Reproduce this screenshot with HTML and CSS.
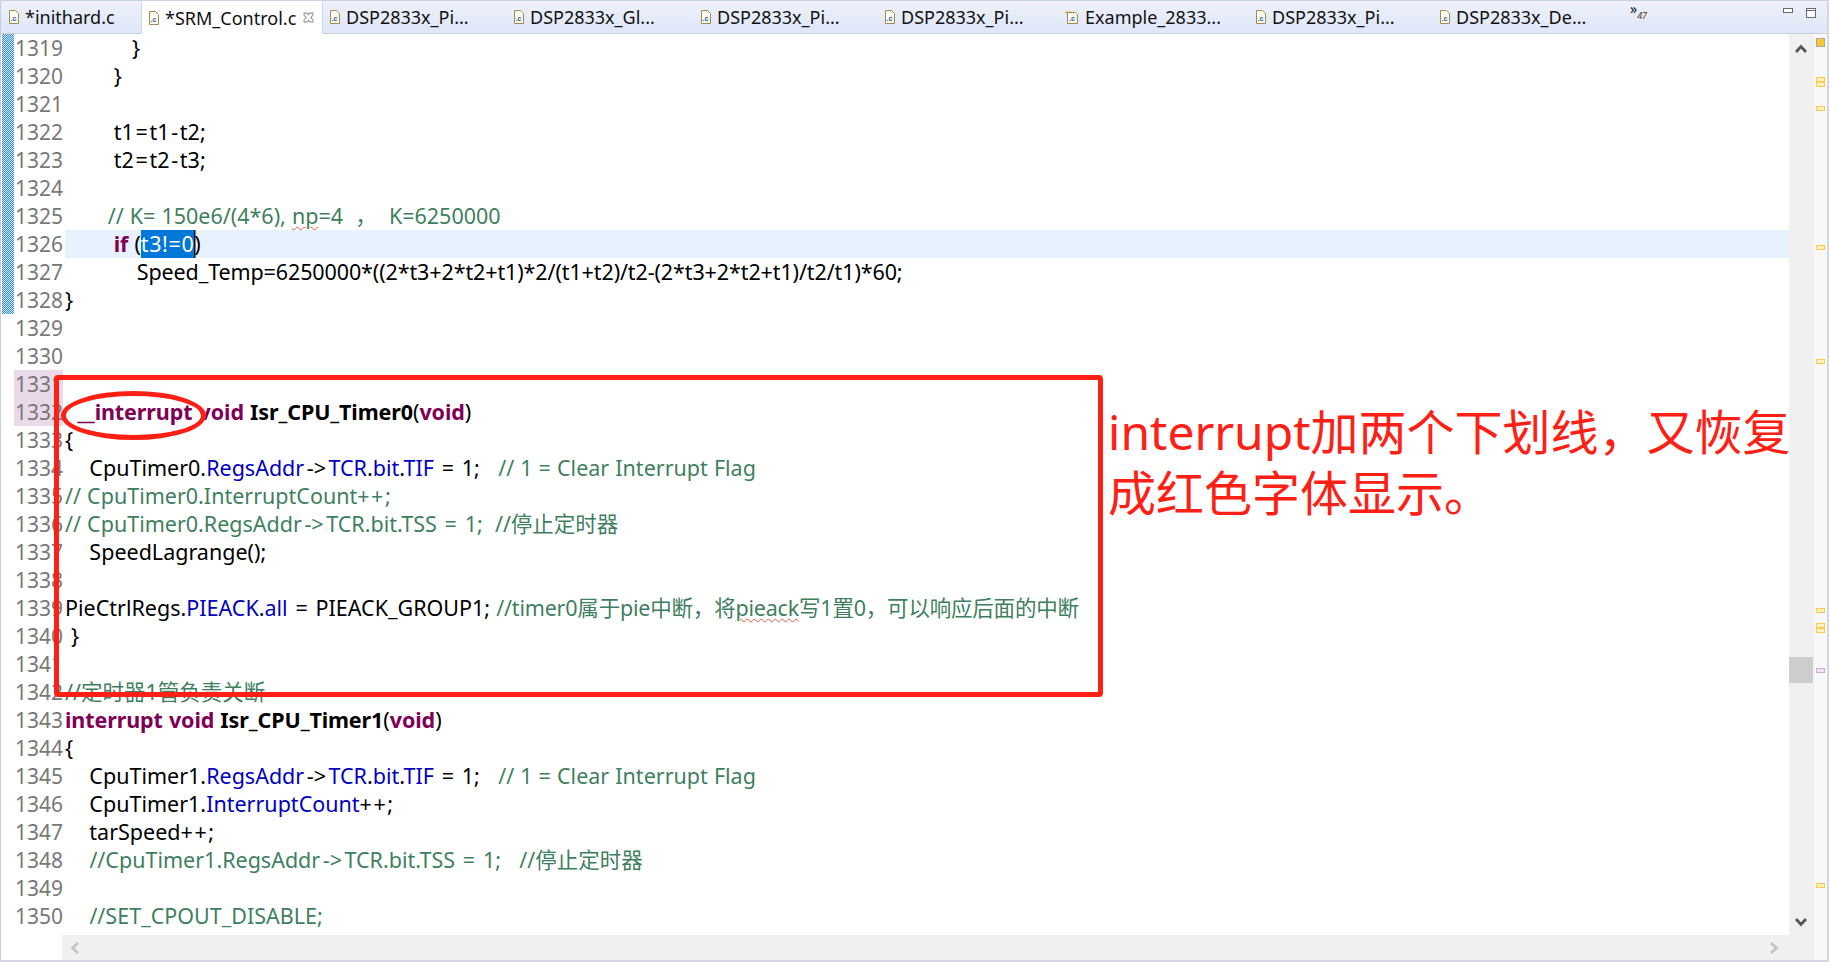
FILE: index.html
```html
<!DOCTYPE html>
<html lang="zh-CN">
<head>
<meta charset="utf-8">
<title>SRM_Control.c</title>
<link rel="stylesheet" href="styles.css">
</head>
<body>
<div class="window">
  <div class="tabs">
    <div class="tab t1"><svg class="fi" viewBox="0 0 12 14"><path d="M1.5.5h6l3 3v10h-9z" fill="#fdfbf0" stroke="#a08c50"/><text x="2.5" y="11" class="fit">.c</text></svg>*inithard.c</div>
    <div class="tab active"><svg class="fi" viewBox="0 0 12 14"><path d="M1.5.5h6l3 3v10h-9z" fill="#fdfbf0" stroke="#a08c50"/><text x="2.5" y="11" class="fit">.c</text></svg>*SRM_Control.c<svg class="close" viewBox="0 0 10 10"><path d="M1 1l3 0 1 1.500 1-1.500 3 0 0 2-2 2 2 2 0 2-3 0-1-1.500-1 1.500-3 0 0-2 2-2-2-2z" fill="none" stroke="#9a9a9a"/></svg></div>
    <div class="tab t3"><svg class="fi" viewBox="0 0 12 14"><path d="M1.5.5h6l3 3v10h-9z" fill="#fdfbf0" stroke="#a08c50"/><text x="2.5" y="11" class="fit">.c</text></svg>DSP2833x_Pi...</div>
    <div class="tab t3 w187"><svg class="fi" viewBox="0 0 12 14"><path d="M1.5.5h6l3 3v10h-9z" fill="#fdfbf0" stroke="#a08c50"/><text x="2.5" y="11" class="fit">.c</text></svg>DSP2833x_Gl...</div>
    <div class="tab t3"><svg class="fi" viewBox="0 0 12 14"><path d="M1.5.5h6l3 3v10h-9z" fill="#fdfbf0" stroke="#a08c50"/><text x="2.5" y="11" class="fit">.c</text></svg>DSP2833x_Pi...</div>
    <div class="tab t3 w181"><svg class="fi" viewBox="0 0 12 14"><path d="M1.5.5h6l3 3v10h-9z" fill="#fdfbf0" stroke="#a08c50"/><text x="2.5" y="11" class="fit">.c</text></svg>DSP2833x_Pi...</div>
    <div class="tab t3 w190"><svg class="fi wide" viewBox="0 0 15 14"><path d="M0 1.500h6l2 2h-8z" fill="#d8b850"/><path d="M2.500 2.500h8l2 2v9h-10z" fill="#fdfbf0" stroke="#a08c50"/><text x="4" y="11" class="fit">.c</text></svg>Example_2833...</div>
    <div class="tab t3"><svg class="fi" viewBox="0 0 12 14"><path d="M1.5.5h6l3 3v10h-9z" fill="#fdfbf0" stroke="#a08c50"/><text x="2.5" y="11" class="fit">.c</text></svg>DSP2833x_Pi...</div>
    <div class="tab t3"><svg class="fi" viewBox="0 0 12 14"><path d="M1.5.5h6l3 3v10h-9z" fill="#fdfbf0" stroke="#a08c50"/><text x="2.5" y="11" class="fit">.c</text></svg>DSP2833x_De...</div>
    <div class="more">»<span class="more-n">47</span></div>
    <div class="winbtns">
      <svg class="wb" viewBox="0 0 10 5"><rect x=".5" y=".5" width="9" height="4" fill="#fff" stroke="#6a6a6a"/></svg>
      <svg class="wb2" viewBox="0 0 10 10"><rect x=".5" y=".5" width="9" height="9" fill="#fff" stroke="#6a6a6a"/><path d="M0 2.500h10" stroke="#6a6a6a"/></svg>
    </div>
  </div>
  <div class="editor">
    <div class="stripe"></div>
    <div class="gutter">
      <div>1319</div><div>1320</div><div>1321</div><div>1322</div><div>1323</div><div>1324</div><div>1325</div><div>1326</div><div>1327</div><div>1328</div><div>1329</div><div>1330</div>
      <div class="mark">1331</div><div class="mark">1332</div>
      <div>1333</div><div>1334</div><div>1335</div><div>1336</div><div>1337</div><div>1338</div><div>1339</div><div>1340</div><div>1341</div><div>1342</div><div>1343</div><div>1344</div><div>1345</div><div>1346</div><div>1347</div><div>1348</div><div>1349</div><div>1350</div>
    </div>
    <div class="code">
      <div class="ln">           }</div>
      <div class="ln">        }</div>
      <div class="ln"></div>
      <div class="ln">        t1<span class="o">=</span>t1<span class="o">-</span>t2;</div>
      <div class="ln">        t2<span class="o">=</span>t2<span class="o">-</span>t3;</div>
      <div class="ln"></div>
      <div class="ln">       <span class="c">// K= 150e6/(4*6), <span class="sq">np</span>=4  ，  K=6250000</span></div>
      <div class="ln cur">        <b class="k">if</b> (<span class="sel">t3!=0</span>)</div>
      <div class="ln speed">            Speed_Temp=6250000*((2*t3+2*t2+t1)*2/(t1+t2)/t2-(2*t3+2*t2+t1)/t2/t1)*60;</div>
      <div class="ln">}</div>
      <div class="ln"></div>
      <div class="ln"></div>
      <div class="ln"></div>
      <div class="ln">  <b class="k">__interrupt</b> <b class="k">void</b> <b>Isr_CPU_Timer0</b>(<b class="k">void</b>)</div>
      <div class="ln">{</div>
      <div class="ln">    CpuTimer0.<span class="f">RegsAddr</span><span class="ar">-&gt;</span><span class="f">TCR</span>.<span class="f">bit</span>.<span class="f">TIF</span> <span class="o">=</span> 1;   <span class="c">// 1 = Clear Interrupt Flag</span></div>
      <div class="ln"><span class="c">// CpuTimer0.InterruptCount<span class="pp">++</span>;</span></div>
      <div class="ln"><span class="c">// CpuTimer0.RegsAddr<span class="ar">-&gt;</span>TCR.bit.TSS <span class="o">=</span> 1;  //停止定时器</span></div>
      <div class="ln">    SpeedLagrange();</div>
      <div class="ln"></div>
      <div class="ln">PieCtrlRegs.<span class="f">PIEACK</span>.<span class="f">all</span> <span class="o">=</span> PIEACK_GROUP1; <span class="c tight">//timer0属于pie中断，将<span class="sq">pieack</span>写1置0，可以响应后面的中断</span></div>
      <div class="ln"> }</div>
      <div class="ln"></div>
      <div class="ln"><span class="c">//定时器1管负责关断</span></div>
      <div class="ln"><b class="k">interrupt</b> <b class="k">void</b> <b>Isr_CPU_Timer1</b>(<b class="k">void</b>)</div>
      <div class="ln">{</div>
      <div class="ln">    CpuTimer1.<span class="f">RegsAddr</span><span class="ar">-&gt;</span><span class="f">TCR</span>.<span class="f">bit</span>.<span class="f">TIF</span> <span class="o">=</span> 1;   <span class="c">// 1 = Clear Interrupt Flag</span></div>
      <div class="ln">    CpuTimer1.<span class="f">InterruptCount</span><span class="pp">++</span>;</div>
      <div class="ln">    tarSpeed<span class="pp">++</span>;</div>
      <div class="ln">    <span class="c">//CpuTimer1.RegsAddr<span class="ar">-&gt;</span>TCR.bit.TSS <span class="o">=</span> 1;   //停止定时器</span></div>
      <div class="ln"></div>
      <div class="ln">    <span class="c">//SET_CPOUT_DISABLE;</span></div>
    </div>
    <div class="vscroll">
      <svg class="arrow" viewBox="0 0 12 9"><path d="M1 8l5-5.500 5 5.500" fill="none" stroke="#555" stroke-width="2.800"/></svg>
      <div class="thumb"></div>
      <svg class="arrow" viewBox="0 0 12 9"><path d="M1 1l5 5.500 5-5.500" fill="none" stroke="#555" stroke-width="2.800"/></svg>
    </div>
    <div class="ruler">
      <i class="top"></i>
      <i class="rm y m1"></i><i class="rm y m2"></i><i class="rm y m3"></i><i class="rm y m4"></i><i class="rm y m5"></i><i class="rm y m6"></i><i class="rm y m7"></i><i class="rm y m7b"></i><i class="rm p m8"></i><i class="rm y m9"></i>
    </div>
    <div class="hscroll">
      <svg class="harrow" viewBox="0 0 9 12"><path d="M8 1L2.500 6 8 11" fill="none" stroke="#c4c4c4" stroke-width="2.800"/></svg>
      <svg class="harrow" viewBox="0 0 9 12"><path d="M1 1l5.500 5L1 11" fill="none" stroke="#c4c4c4" stroke-width="2.800"/></svg>
    </div>
  </div>
  <div class="box"></div>
  <div class="oval"></div>
  <div class="note">interrupt加两个下划线，又恢复<br>成红色字体显示。</div>
</div>
</body>
</html>
```

FILE: styles.css
```css
* { box-sizing: border-box; }
html, body { margin: 0; height: 100%; background: #fff; overflow: hidden; }
.window {
  position: relative;
  width: 1829px;
  height: 962px;
  display: flex;
  flex-direction: column;
  font-family: "Noto Sans", "Noto Sans CJK SC", sans-serif;
  border-right: 2px solid #d4d6e4;
  border-bottom: 2px solid #d4d6e4;
  border-left: 1px solid #c8cce0;
}
.tabs {
  height: 34px;
  flex: none;
  display: flex;
  align-items: stretch;
  background: linear-gradient(#eef1fb, #dfe6f8);
  border-top: 1px solid #ccd2e6;
  border-bottom: 1px solid #c6cee2;
  font-size: 18px;
  color: #111;
}
.tab { display: flex; align-items: center; white-space: nowrap; flex: none; }
.t1 { width: 140px; padding-left: 7px; }
.active {
  width: 182px;
  padding-left: 6px;
  background: #fff;
  margin-bottom: -1px;
  border-left: 1px solid #d0d6e8;
  border-right: 1px solid #d0d6e8;
}
.t3 { width: 184px; padding-left: 6px; }
.w187 { width: 187px; }
.w181 { width: 181px; }
.w190 { width: 190px; }
.fi { width: 12px; height: 14px; margin-right: 5px; flex: none; }
.fi.wide { width: 15px; margin-right: 5px; }
.fit { font-size: 7px; font-weight: 700; fill: #2a5a9a; font-family: "Liberation Sans", sans-serif; }
.close { width: 11px; height: 11px; margin-left: 7px; flex: none; }
.more { margin-left: 13px; padding-top: 1px; font-size: 14px; line-height: 14px; width: 24px; }
.more-n { font-size: 9px; font-style: italic; color: #5a2a10; position: relative; top: 5px; }
.winbtns { margin-left: auto; display: flex; align-items: flex-start; gap: 13px; padding: 7px 11px 0 0; }
.wb { width: 10px; height: 5px; }
.wb2 { width: 10px; height: 10px; }
.editor {
  flex: 1;
  min-height: 0;
  display: grid;
  grid-template-columns: 13px 51px 1fr 25px 13px;
  grid-template-rows: 1fr 25px;
}
.stripe {
  height: 280px;
  margin-left: 1px;
  background: repeating-conic-gradient(#3c8fdc 0 25%, #cfe4f7 0 50%) 0 0 / 2px 2px;
}
.gutter {
  font-size: 21px;
  line-height: 28px;
  color: #787878;
}
.gutter div { height: 28px; width: 49px; padding-left: 1px; }
.gutter .mark { background: #ead9e9; }
.code {
  font-size: 21.5px;
  line-height: 28px;
  word-spacing: .5px;
  color: #000;
  overflow: hidden;
  min-width: 0;
}
.ln { height: 28px; white-space: pre; }
.ln.cur { background: #e8f2fe; }
.speed { letter-spacing: -.11px; }
.k { color: #7f0055; font-weight: 700; }
.c { color: #3f7f5f; }
.f { color: #0000c0; }
.o { padding: 0 1.700px; }
.ar { padding: 0 2.500px; }
.pp { letter-spacing: 1.500px; }
.tight { letter-spacing: -.2px; }
.sel {
  display: inline-block;
  height: 28px;
  background: #0078d7;
  color: #fff;
  letter-spacing: .6px;
  box-shadow: 1.500px 0 0 #111;
}
.sq { text-decoration: underline wavy #e06040 1px; text-underline-offset: 2px; }
b { font-weight: 700; letter-spacing: -.1px; }
.vscroll {
  grid-column: 4;
  grid-row: 1 / 3;
  position: relative;
  background: #f0f0f0;
  display: flex;
  flex-direction: column;
  justify-content: space-between;
  align-items: center;
  padding: 10px 1px 33px 0;
}
.arrow { width: 12px; height: 9px; }
.thumb { position: absolute; left: 0; top: 623px; width: 24px; height: 26px; background: #cdcdcd; }
.ruler {
  grid-column: 5;
  grid-row: 1 / 3;
  position: relative;
  background: #f8f8f8;
}
.top { position: absolute; left: 2px; top: 4px; width: 9px; height: 9px; background: #f8c830; border: 1px solid #a8a8a8; }
.rm { position: absolute; left: 2px; width: 9px; height: 5px; border: 1px solid; }
.y { background: #fdf0c0; border-color: #f8cc50; }
.p { background: #f2e2f2; border-color: #d8a8d8; }
.m1 { top: 43px; } .m2 { top: 48px; } .m3 { top: 72px; } .m4 { top: 211px; } .m5 { top: 325px; }
.m6 { top: 574px; } .m7 { top: 589px; } .m7b { top: 594px; } .m8 { top: 634px; } .m9 { top: 849px; }
.hscroll {
  grid-column: 2 / 4;
  grid-row: 2;
  margin-left: 48px;
  background: #f0f0f0;
  display: flex;
  justify-content: space-between;
  align-items: center;
  padding: 0 10px 0 8px;
}
.harrow { width: 9px; height: 12px; }
.box {
  position: absolute;
  left: 53px; top: 375px;
  width: 1049px; height: 322px;
  border: 5px solid #ff2015;
  border-radius: 4px;
}
.oval {
  position: absolute;
  left: 60px; top: 391px;
  width: 145px; height: 49px;
  border: 5px solid #ff2015;
  border-radius: 50%;
}
.note {
  position: absolute;
  left: 1107px; top: 401px;
  font-size: 48px;
  line-height: 61px;
  color: #ff2015;
  white-space: nowrap;
}
```
